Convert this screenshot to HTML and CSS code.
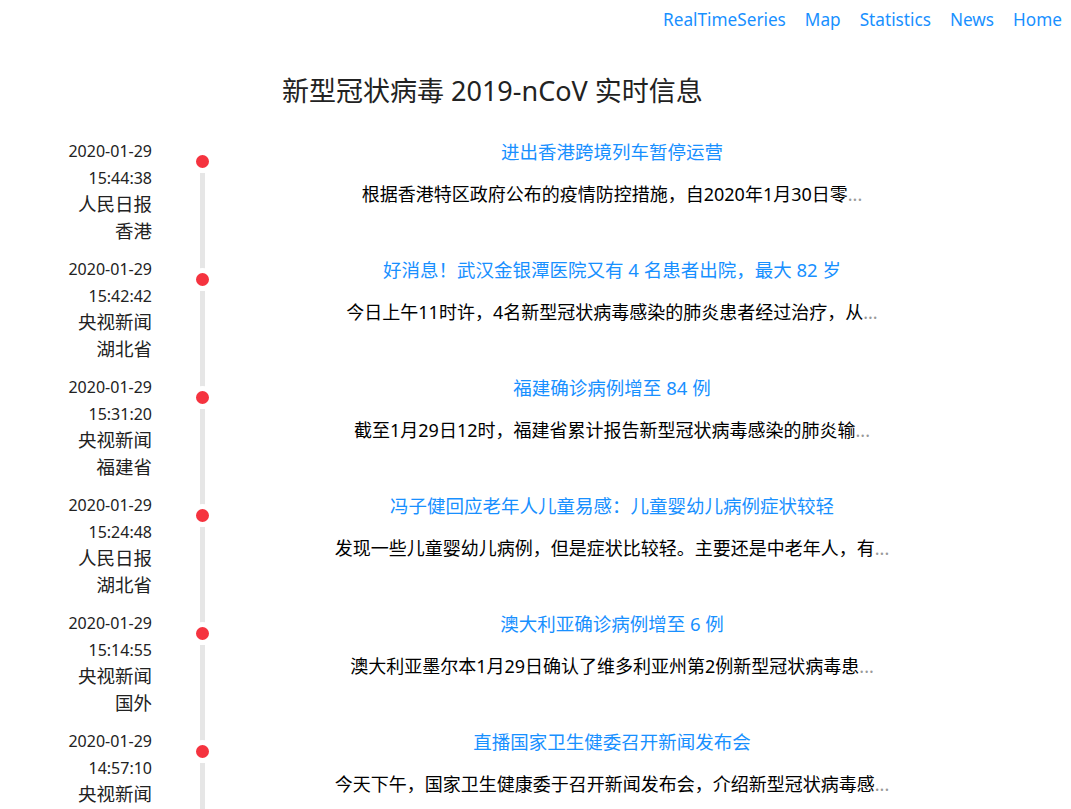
FILE: index.html
```html
<!DOCTYPE html>
<html lang="zh-CN">
<head>
<meta charset="utf-8">
<title>新型冠状病毒 2019-nCoV 实时信息</title>
<link rel="stylesheet" href="styles.css">
</head>
<body>
<nav class="nav">
  <a href="#">RealTimeSeries</a>
  <a href="#">Map</a>
  <a href="#">Statistics</a>
  <a href="#">News</a>
  <a href="#">Home</a>
</nav>
<h1 class="page-title">新型冠状病毒 2019-nCoV 实时信息</h1>
<ul class="timeline">
  <li class="item">
    <div class="label"><div class="date">2020-01-29</div><div class="date">15:44:38</div><div>人民日报</div><div>香港</div></div>
    <div class="axis"><span class="dot"></span></div>
    <div class="content"><a class="title" href="#">进出香港跨境列车暂停运营</a><p class="desc">根据香港特区政府公布的疫情防控措施，自2020年1月30日零<span class="more">...</span></p></div>
  </li>
  <li class="item">
    <div class="label"><div class="date">2020-01-29</div><div class="date">15:42:42</div><div>央视新闻</div><div>湖北省</div></div>
    <div class="axis"><span class="dot"></span></div>
    <div class="content"><a class="title" href="#">好消息！武汉金银潭医院又有 4 名患者出院，最大 82 岁</a><p class="desc">今日上午11时许，4名新型冠状病毒感染的肺炎患者经过治疗，从<span class="more">...</span></p></div>
  </li>
  <li class="item">
    <div class="label"><div class="date">2020-01-29</div><div class="date">15:31:20</div><div>央视新闻</div><div>福建省</div></div>
    <div class="axis"><span class="dot"></span></div>
    <div class="content"><a class="title" href="#">福建确诊病例增至 84 例</a><p class="desc">截至1月29日12时，福建省累计报告新型冠状病毒感染的肺炎输<span class="more">...</span></p></div>
  </li>
  <li class="item">
    <div class="label"><div class="date">2020-01-29</div><div class="date">15:24:48</div><div>人民日报</div><div>湖北省</div></div>
    <div class="axis"><span class="dot"></span></div>
    <div class="content"><a class="title" href="#">冯子健回应老年人儿童易感：儿童婴幼儿病例症状较轻</a><p class="desc">发现一些儿童婴幼儿病例，但是症状比较轻。主要还是中老年人，有<span class="more">...</span></p></div>
  </li>
  <li class="item">
    <div class="label"><div class="date">2020-01-29</div><div class="date">15:14:55</div><div>央视新闻</div><div>国外</div></div>
    <div class="axis"><span class="dot"></span></div>
    <div class="content"><a class="title" href="#">澳大利亚确诊病例增至 6 例</a><p class="desc">澳大利亚墨尔本1月29日确认了维多利亚州第2例新型冠状病毒患<span class="more">...</span></p></div>
  </li>
  <li class="item">
    <div class="label"><div class="date">2020-01-29</div><div class="date">14:57:10</div><div>央视新闻</div><div>全国</div></div>
    <div class="axis"><span class="dot"></span></div>
    <div class="content"><a class="title" href="#">直播国家卫生健委召开新闻发布会</a><p class="desc">今天下午，国家卫生健康委于召开新闻发布会，介绍新型冠状病毒感<span class="more">...</span></p></div>
  </li>
</ul>
</body>
</html>
```

FILE: styles.css
```css
* { box-sizing: border-box; }

body {
  margin: 0;
  background: #fff;
  color: #000;
  font-family: "Noto Sans", "Noto Sans CJK SC", sans-serif;
}

a { text-decoration: none; color: #1890ff; }

.nav {
  display: flex;
  justify-content: flex-end;
  gap: 19px;
  padding: 8px 9px 0 0;
  height: 40px;
  font-size: 17.2px;
  line-height: 24px;
}

.page-title {
  margin: 31px 0 0;
  padding-left: 282px;
  font-size: 27px;
  font-weight: 400;
  line-height: 40px;
  color: #222;
}

.timeline {
  list-style: none;
  margin: 27px 0 0;
  padding: 0;
}

.item {
  display: grid;
  grid-template-columns: 152px 100px 720px;
  height: 118px;
}

.label {
  text-align: right;
  font-size: 18.5px;
  line-height: 26.7px;
  color: #222;
}

.label .date { font-size: 16px; }

.axis {
  position: relative;
  display: flex;
  justify-content: center;
}

.axis::before {
  content: "";
  position: absolute;
  top: 12px;
  bottom: -12px;
  left: 48px;
  width: 5px;
  background: #e6e6e6;
}

.item:last-child .axis::before { bottom: 0; }

.dot {
  position: relative;
  margin-top: 12px;
  width: 23px;
  height: 23px;
  border: 5px solid #fff;
  border-radius: 50%;
  background: #f5333f;
}

.content {
  text-align: center;
}

.title {
  display: block;
  font-size: 18.5px;
  line-height: 27px;
}

.desc {
  margin: 16px 0 0;
  font-size: 18px;
  line-height: 27px;
  color: #000;
}

.more { color: #999; }
```
